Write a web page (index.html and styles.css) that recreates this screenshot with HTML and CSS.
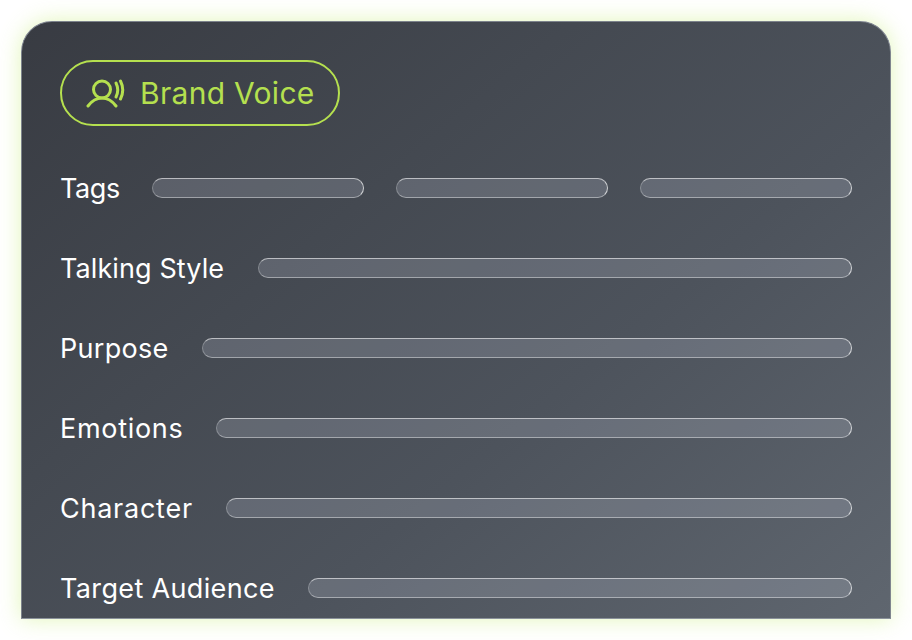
FILE: index.html
```
<!DOCTYPE html>
<html lang="en">
<head>
<meta charset="utf-8">
<title>Brand Voice</title>
<link rel="stylesheet" href="styles.css">
</head>
<body>
<main class="card">
  <div class="pill">
    <svg class="pill-icon" viewBox="0 0 40 30" width="40" height="30" fill="none" stroke="#b5e04f" stroke-width="3" stroke-linecap="round" aria-hidden="true">
      <circle cx="17" cy="11.500" r="8.500"/>
      <path d="M3 28Q9 20 17 20Q25 20 31 28"/>
      <path d="M31 5Q34.500 12 31 19"/>
      <path d="M35.500 3Q40 12 35.500 21"/>
    </svg>
    <span>Brand Voice</span>
  </div>
  <div class="row row-first">
    <span class="label label-tags">Tags</span>
    <div class="tags"><i class="bar"></i><i class="bar"></i><i class="bar"></i></div>
  </div>
  <div class="row"><span class="label label-style">Talking Style</span><i class="bar"></i></div>
  <div class="row"><span class="label label-purpose">Purpose</span><i class="bar"></i></div>
  <div class="row"><span class="label label-emotions">Emotions</span><i class="bar"></i></div>
  <div class="row"><span class="label label-character">Character</span><i class="bar"></i></div>
  <div class="row"><span class="label label-audience">Target Audience</span><i class="bar"></i></div>
</main>
</body>
</html>
```
FILE: styles.css
```
* { box-sizing: border-box; }
html, body { margin: 0; height: 100%; background: #fff; overflow: hidden; }
body { padding: 21px; font-family: "Inter", "Liberation Sans", sans-serif; }
.card {
  width: 870px;
  height: 598px;
  padding: 38px 38px 0;
  border: 1px solid #7d838c;
  border-bottom-color: #8b929b;
  border-right-color: #7f858e;
  border-radius: 31px 31px 0 0;
  background: linear-gradient(140deg, #383b42 0%, #444951 35%, #4d535c 62%, #5f666f 100%);
  box-shadow: 0 0 22px rgba(190, 235, 100, 0.45);
  overflow: hidden;
}
.pill {
  display: flex;
  align-items: center;
  gap: 15px;
  width: 280px;
  height: 66px;
  padding-left: 23px;
  border: 2px solid #b5e04f;
  border-radius: 33px;
  color: #b5e04f;
  font-size: 30px;
  letter-spacing: 0.3px;
  white-space: nowrap;
}
.pill-icon { flex: none; }
.row {
  display: flex;
  align-items: center;
  height: 40px;
  margin-top: 40px;
}
.row-first { margin-top: 42px; }
.label {
  flex: none;
  padding-top: 2px;
  color: #fff;
  font-size: 27px;
  letter-spacing: 0.3px;
  line-height: 40px;
  white-space: nowrap;
}
.label-tags { width: 92px; letter-spacing: -0.4px; }
.label-style { width: 198px; letter-spacing: 0.1px; }
.label-purpose { width: 142px; }
.label-emotions { width: 156px; letter-spacing: 0.7px; }
.label-character { width: 166px; letter-spacing: 0.75px; }
.label-audience { width: 248px; letter-spacing: 0.35px; }
.bar {
  display: block;
  flex: 1;
  height: 20px;
  border: 1px solid rgba(255, 255, 255, 0.58);
  border-left-color: rgba(255, 255, 255, 0.25);
  border-right-color: rgba(255, 255, 255, 0.7);
  border-bottom-color: rgba(255, 255, 255, 0.42);
  border-radius: 10px;
  background: rgba(230, 238, 255, 0.17);
}
.tags { flex: 1; display: flex; gap: 32px; }
```
